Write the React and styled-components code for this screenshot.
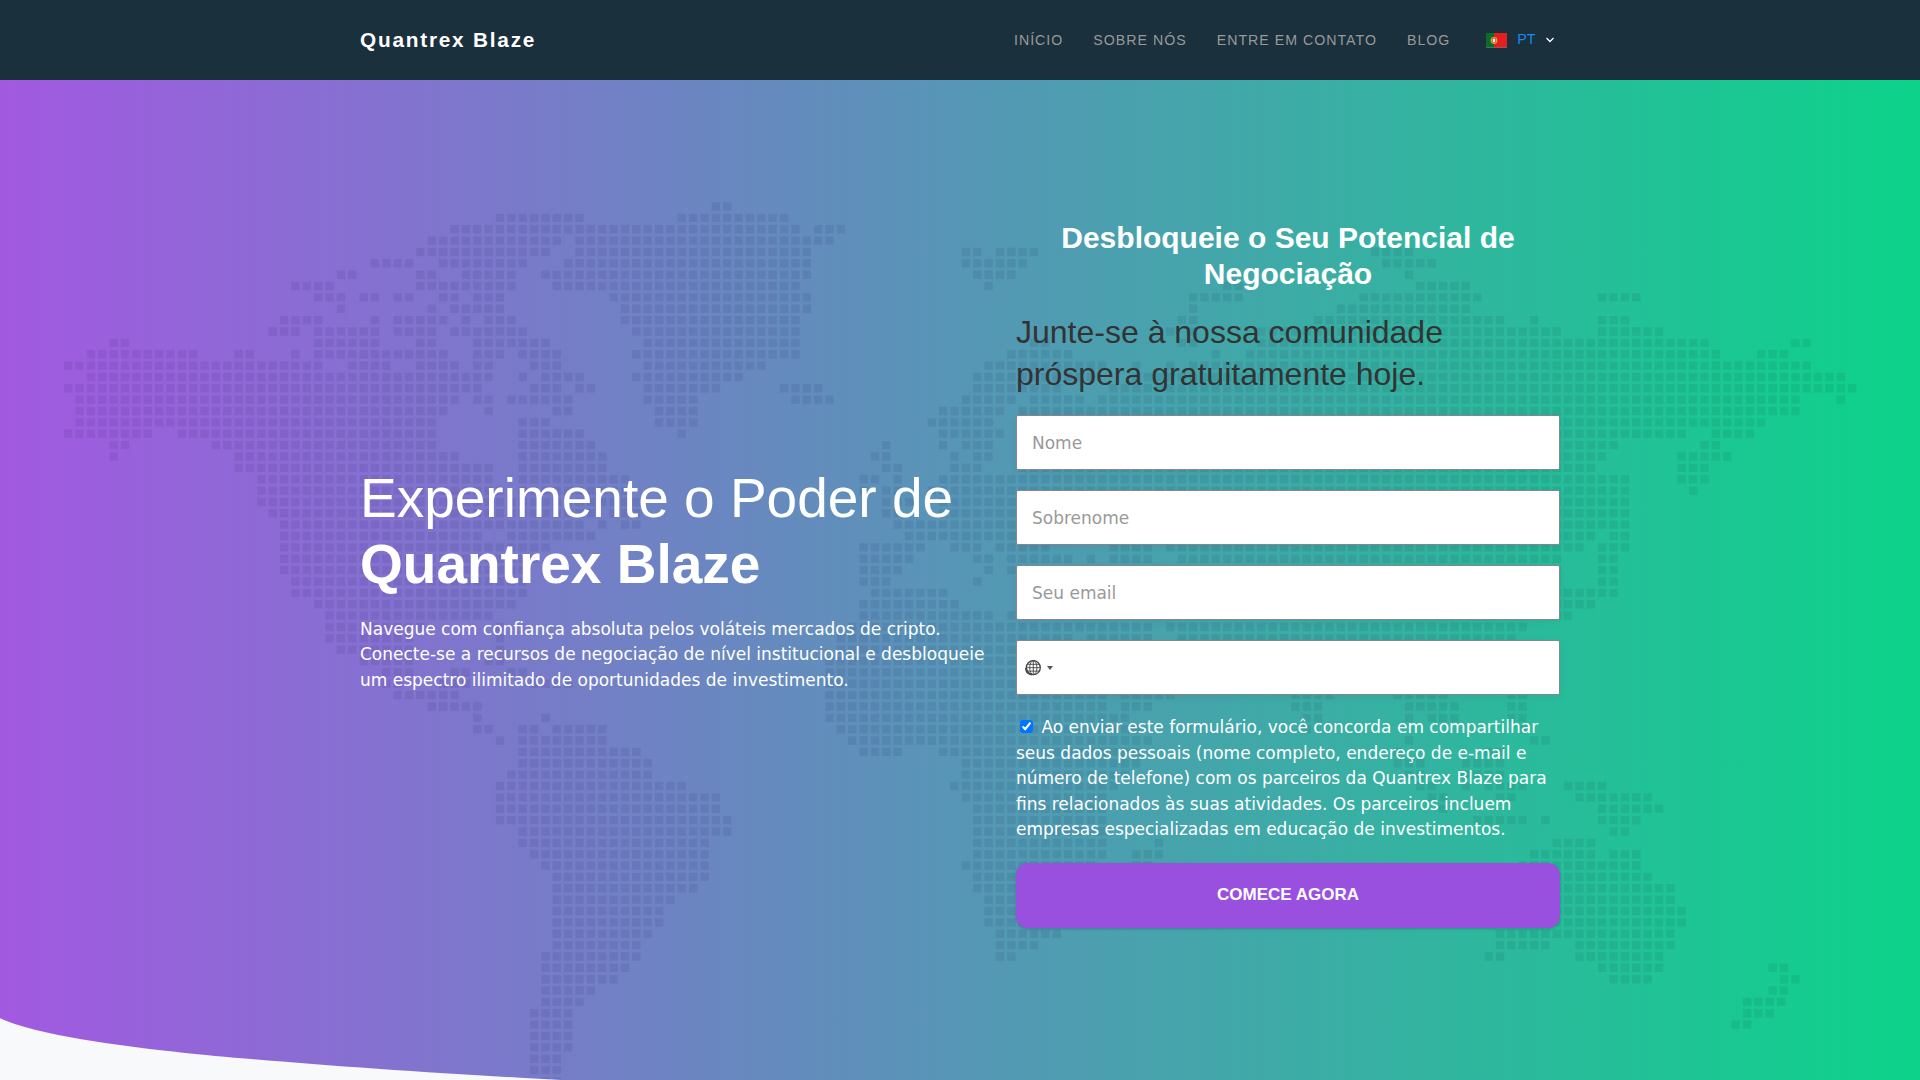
import React from "react";
import styled, { createGlobalStyle } from "styled-components";

const GlobalStyle = createGlobalStyle`
  *, *::before, *::after { box-sizing: border-box; }
  html, body { margin: 0; height: 100%; overflow: hidden; }
  body {
    background: #f7f9fa;
    color: #333;
    font-family: "DejaVu Sans", sans-serif;
    font-size: 17px;
    line-height: 25.5px;
  }
`;

const heading = `font-family: "Liberation Sans", Arial, sans-serif;`;

const Page = styled.div`
  display: flex;
  flex-direction: column;
  height: 1080px;
  overflow: hidden;
`;

const Header = styled.header`
  flex: none;
  height: 80px;
  background: #1a303c;
`;

const Container = styled.div`
  width: 1200px;
  margin: 0 auto;
  display: flex;
`;

const HeaderBar = styled(Container)`
  height: 100%;
  align-items: center;
  justify-content: space-between;
`;

const Logo = styled.a`
  ${heading}
  font-size: 20.8px;
  font-weight: 700;
  letter-spacing: 1.77px;
  color: #fff;
  text-decoration: none;
`;

const Nav = styled.nav`
  ${heading}
  display: flex;
  align-items: center;
  gap: 30px;
  font-size: 14.2px;
`;

const NavLink = styled.a`
  padding-top: 2px;
  color: #999;
  letter-spacing: 1px;
  text-transform: uppercase;
  text-decoration: none;
`;

const Language = styled.button`
  ${heading}
  display: flex;
  align-items: center;
  margin: 0 5px 0 6px;
  padding: 0;
  border: 0;
  background: none;
  color: #1e88f0;
  font-size: 14.2px;

  span { margin: -3px 9.5px 0 10px; }
`;

const Hero = styled.main`
  position: relative;
  flex: 1;
  background: linear-gradient(to right, #a259e1, #0cd38a);
`;

const MapLayer = styled.svg`
  position: absolute;
  inset: 0;
  width: 100%;
  height: 100%;
  fill-opacity: 0.085;
`;

const Curve = styled.svg`
  position: absolute;
  left: 0;
  bottom: 0;
  fill: #f7f9fa;
`;

const HeroContent = styled(Container)`
  position: relative;
  height: 100%;
  align-items: center;
  justify-content: space-between;
`;

const Intro = styled.section`
  width: 635px;
  margin-bottom: 1.2px;
  color: #fff;
`;

const HeroTitle = styled.h1`
  ${heading}
  margin: 0 0 19.5px;
  font-size: 55px;
  font-weight: 400;
  line-height: 66px;

  strong { display: block; font-weight: 700; }
`;

const Lead = styled.p`
  margin: 0;
`;

const Form = styled.form`
  width: 544px;
  margin-bottom: 12px;
  display: flex;
  flex-direction: column;
`;

const FormTitle = styled.h2`
  ${heading}
  margin: 0 0 19px;
  color: #fff;
  font-size: 30px;
  line-height: 36px;
  text-align: center;
`;

const FormSubtitle = styled.h3`
  ${heading}
  margin: 0 0 20px;
  color: #333;
  font-size: 32px;
  font-weight: 400;
  line-height: 42px;
`;

const Fields = styled.div`
  display: flex;
  flex-direction: column;
  gap: 20px;
`;

const Field = styled.div`
  display: flex;
  align-items: center;
  height: 55px;
  padding: 0 ${(p) => (p.$phone ? "8px" : "15px")};
  border: 1px solid #868591;
  border-radius: 2px;
  background: #fff;
  box-shadow: 0 2px 10px rgba(0, 0, 0, 0.06);
`;

const Input = styled.input`
  flex: 1;
  min-width: 0;
  padding: 0;
  border: 0;
  outline: 0;
  background: none;
  font: 17px "DejaVu Sans", sans-serif;

  &::placeholder { color: #999; opacity: 1; }
`;

const CountryPicker = styled.span`
  display: flex;
  align-items: center;
  gap: 6px;
`;

const Caret = styled.i`
  border: 3px solid transparent;
  border-top: 4px solid #555;
  border-bottom: 0;
`;

const Consent = styled.label`
  margin: 20px 0;
  color: #fff;

  input { margin: 3px 3px 3px 4px; width: 13px; height: 13px; }
`;

const Submit = styled.button`
  ${heading}
  height: 65px;
  border: 0;
  border-radius: 12px;
  background: #9a50df;
  box-shadow: 0 1px 3px rgba(0, 0, 0, 0.2);
  color: #fff;
  font-size: 17px;
  font-weight: 700;
  text-transform: uppercase;
`;

/* Each entry is one row of the dotted world map: inclusive column runs. */
const MAP_ROWS = [
  "57-58",
  "38-45 54-63",
  "34-64 66-68",
  "32-43 45-67",
  "31-42 45-65 79-80 82-85 115-118",
  "27-30 33-40 44-65 79-84 116-120",
  "24-25 31-32 35-39 42-65 80-83 118-118",
  "20-23 31-39 43-64 81-81 102-103 119-123",
  "22-24 26-27 29-30 33-34 36-38 48-65 99-103 114-124 135-138",
  "24-24 32-32 34-38 49-65 99-99 112-123",
  "19-22 27-27 29-33 35-35 37-39 49-64 98-99 110-126 129-129 135-137",
  "18-20 22-27 29-32 34-40 50-64 97-97 99-99 105-131 135-140",
  "4-5 22-27 31-32 36-42 51-64 85-86 98-99 105-144 152-153",
  "2-11 15-16 20-20 22-33 36-38 40-43 50-64 83-88 101-101 104-145 149-151",
  "0-22 25-28 31-34 36-37 41-43 51-61 81-91 94-94 97-97 99-153",
  "2-37 40-40 42-45 50-59 80-90 94-156",
  "0-36 41-43 45-46 51-57 63-66 80-87 92-157",
  "1-34 36-37 39-44 51-55 64-67 79-83 85-89 91-152 156-156",
  "1-33 37-37 43-44 52-55 77-82 84-152",
  "1-32 40-42 52-55 76-81 84-149",
  "0-7 10-32 40-45 54-54 77-82 84-142 145-148",
  "4-5 13-32 40-46 72-72 77-77 79-81 84-136 144-145",
  "4-4 15-34 40-47 71-72 78-78 80-81 84-135 142-146",
  "15-37 40-47 72-73 78-80 84-134 142-144",
  "17-37 40-49 70-71 73-73 77-137 142-144",
  "17-38 40-49 70-70 72-73 76-137 143-143",
  "17-50 72-74 77-137",
  "18-46 48-50 72-73 77-137",
  "19-45 47-47 49-50 73-137",
  "19-36 39-46 74-134 136-137",
  "19-42 70-75 78-80 82-86 92-95 97-133 135-137",
  "19-41 70-74 80-81 83-88 90-90 92-95 98-131 135-136",
  "19-40 70-73 81-81 83-131 135-136",
  "20-40 70-72 80-80 84-131 135-136",
  "20-40 71-77 84-136",
  "22-39 70-78 84-134",
  "23-37 70-81 83-132",
  "23-31 38-38 69-95 97-128",
  "23-30 38-38 68-88 90-95 98-127",
  "24-30 38-38 68-127",
  "26-30 37-38 67-127",
  "28-30 34-35 39-40 67-127",
  "28-29 33-35 41-44 67-127",
  "29-34 67-91 93-97 108-111 117-121 127-128",
  "32-36 67-91 93-95 108-110 118-122 127-128",
  "36-36 42-42 67-93 109-110 118-118 120-122 127-128",
  "36-37 40-41 43-47 68-94 109-109 128-128",
  "38-38 40-47 69-95 118-118 129-130",
  "40-50 70-73 77-94 117-117 125-126",
  "40-51 79-94 117-119 123-126",
  "39-51 79-93 118-119 123-126",
  "38-54 78-92 119-120 123-123 125-128 132-135",
  "38-57 79-91 120-121 126-127 133-139",
  "38-57 80-91 121-121 135-140",
  "38-58 80-91 124-128 130-130 135-138",
  "40-58 80-91 136-137",
  "40-56 80-91 96-96 131-134",
  "41-56 80-91 94-96 129-134 136-138",
  "42-56 79-90 94-95 128-138",
  "43-56 80-89 94-95 127-139",
  "43-55 80-89 94-95 126-141",
  "43-53 81-89 126-141",
  "43-52 81-88 126-142",
  "43-52 81-88 126-142",
  "43-51 82-87 126-141",
  "43-50 82-85 126-130 133-141",
  "42-50 82-83 125-126 133-140",
  "42-49 135-140 150-151",
  "42-48 136-139 151-152",
  "42-46 150-151",
  "42-45 147.75-150.75",
  "41-44 147.75-149.75",
  "41-44 146.75-147.75",
  "41-44",
  "41-44",
  "41-43",
  "41-43",
  "42-43",
];

const PITCH = 11.363;
const DOT = 8.4;

const mapPath = MAP_ROWS.map((row, r) =>
  row
    .split(" ")
    .map((run) => {
      const [from, to] = run.split("-").map(Number);
      let d = "";
      for (let c = from; c <= to; c += 1) {
        const x = (64 + c * PITCH).toFixed(2);
        const y = (122.3 + r * PITCH).toFixed(2);
        d += `M${x} ${y}h${DOT}v${DOT}h-${DOT}z`;
      }
      return d;
    })
    .join("")
).join("");

const Flag = () => (
  <svg width="21" height="15" viewBox="0 0 21 15">
    <rect width="21" height="15" fill="#e3201f" />
    <rect width="8" height="15" fill="#0c6b2d" />
    <circle cx="8" cy="7.5" r="3.4" fill="#d9a52b" />
    <path d="M6.2 5.3h3.6v2.9a1.8 1.8 0 0 1-3.6 0z" fill="#e3201f" />
    <path d="M6.8 5.8h2.4v2.4a1.2 1.2 0 0 1-2.4 0z" fill="#fff" />
    <path d="M0 14.5h21" stroke="#777" strokeOpacity=".6" />
  </svg>
);

const Chevron = () => (
  <svg width="10" height="6" viewBox="0 0 10 6" fill="none" stroke="#fff" strokeWidth="1.3">
    <path d="M1.5 1 5 4.5 8.5 1" />
  </svg>
);

const Globe = () => (
  <svg width="16" height="16" viewBox="0 0 16 16" fill="none" stroke="#444">
    <circle cx="8.3" cy="7.7" r="7" strokeWidth="1.3" />
    <ellipse cx="8.3" cy="7.7" rx="3.6" ry="7" strokeWidth=".9" />
    <path d="M8.3.7v14M1.3 7.7h14M2.3 4.3h12M2.3 11.1h12" strokeWidth=".9" />
    <path d="M.9 8.2c.3 3.5 2.6 6 6 6.4" strokeWidth="2" />
  </svg>
);

const NAV_ITEMS = ["Início", "Sobre nós", "Entre em contato", "Blog"];
const FIELDS = ["Nome", "Sobrenome", "Seu email"];

export default function App() {
  return (
    <Page>
      <GlobalStyle />
      <Header>
        <HeaderBar>
          <Logo>Quantrex Blaze</Logo>
          <Nav>
            {NAV_ITEMS.map((item) => (
              <NavLink key={item}>{item}</NavLink>
            ))}
            <Language type="button">
              <Flag />
              <span>PT</span>
              <Chevron />
            </Language>
          </Nav>
        </HeaderBar>
      </Header>
      <Hero>
        <MapLayer viewBox="0 0 1920 1000">
          <defs>
            <linearGradient id="mapTint">
              <stop offset="0" stopColor="#200050" />
              <stop offset=".45" stopColor="#000a50" />
              <stop offset="1" stopColor="#003420" />
            </linearGradient>
          </defs>
          <path d={mapPath} fill="url(#mapTint)" />
        </MapLayer>
        <Curve width="570" height="64" viewBox="0 1016 570 64">
          <path d="M0 1018.3C36 1035 120 1046 183 1052.7S400 1071.5 520 1077.7L562 1080H0z" />
        </Curve>
        <HeroContent>
          <Intro>
            <HeroTitle>
              Experimente o Poder de <strong>Quantrex Blaze</strong>
            </HeroTitle>
            <Lead>
              Navegue com confiança absoluta pelos voláteis mercados de cripto. Conecte-se a
              recursos de negociação de nível institucional e desbloqueie um espectro ilimitado de
              oportunidades de investimento.
            </Lead>
          </Intro>
          <Form>
            <FormTitle>Desbloqueie o Seu Potencial de Negociação</FormTitle>
            <FormSubtitle>Junte-se à nossa comunidade próspera gratuitamente hoje.</FormSubtitle>
            <Fields>
              {FIELDS.map((label) => (
                <Field key={label}>
                  <Input placeholder={label} />
                </Field>
              ))}
              <Field $phone>
                <CountryPicker>
                  <Globe />
                  <Caret />
                </CountryPicker>
                <Input type="tel" />
              </Field>
            </Fields>
            <Consent>
              <input type="checkbox" defaultChecked /> Ao enviar este formulário, você concorda em
              compartilhar seus dados pessoais (nome completo, endereço de e-mail e número de
              telefone) com os parceiros da Quantrex Blaze para fins relacionados às suas
              atividades. Os parceiros incluem empresas especializadas em educação de
              investimentos.
            </Consent>
            <Submit type="button">Comece agora</Submit>
          </Form>
        </HeroContent>
      </Hero>
    </Page>
  );
}
